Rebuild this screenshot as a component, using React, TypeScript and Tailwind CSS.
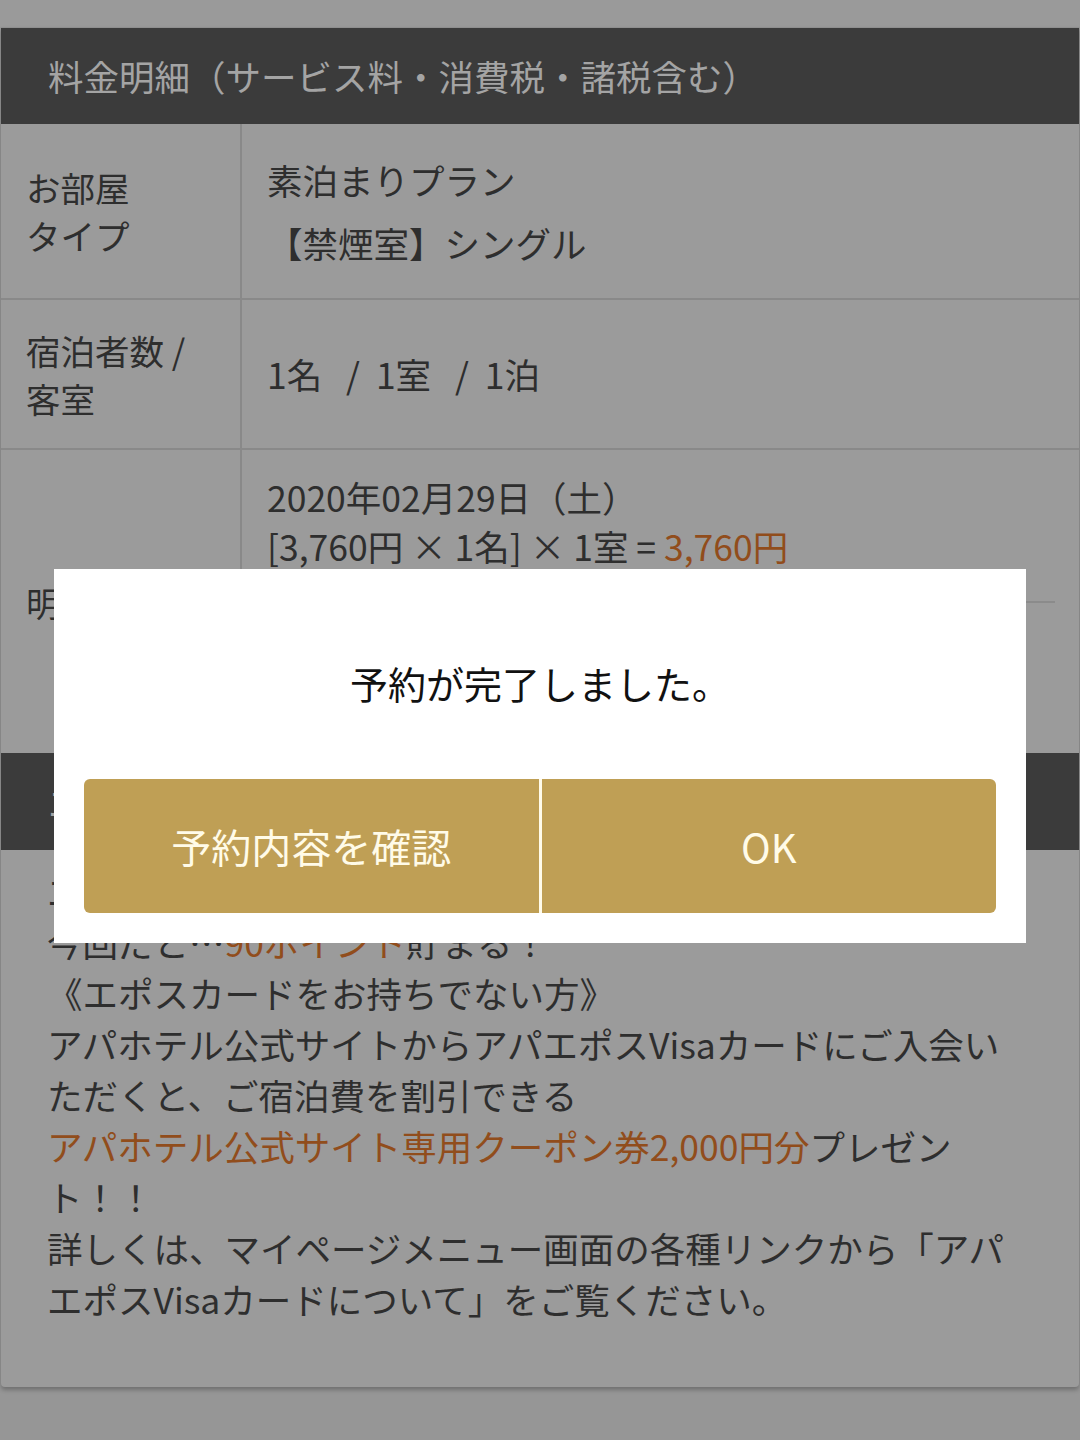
import React from "react";

const font = { fontFamily: '"Noto Sans CJK JP", "Noto Sans", sans-serif' };

export default function App() {
  return (
    <div
      className="relative h-[1440px] w-[1080px] overflow-hidden bg-[#969696] text-[#2e2e2e]"
      style={font}
    >
      <div className="h-[27px] bg-[#9a9a9a]" />
      {/* Card */}
      <div className="mx-[1px] rounded-b-[4px] bg-[#9b9b9b] shadow-[0_3px_4px_rgba(0,0,0,0.25)]">
        <div className="flex h-[97px] items-center border-t border-[#8e8e8e] bg-[#3b3b3b] px-[47px] text-[35.5px] leading-[48px] text-[#a4a4a4]">
          料金明細（サービス料・消費税・諸税含む）
        </div>

        {/* Row 1 */}
        <div className="grid h-[176px] grid-cols-[241px_1fr] border-b-2 border-[#898989]">
          <div className="flex items-center border-r-2 border-[#898989] pl-[25px] text-[34.5px] leading-[48px]">
            <div>
              お部屋
              <br />
              タイプ
            </div>
          </div>
          <div className="flex flex-col justify-center pl-[25px] text-[35.5px] leading-[48px]">
            <div>素泊まりプラン</div>
            <div className="mt-[15px]">【禁煙室】シングル</div>
          </div>
        </div>

        {/* Row 2 */}
        <div className="grid h-[150px] grid-cols-[241px_1fr] border-b-2 border-[#898989]">
          <div className="flex items-center border-r-2 border-[#898989] pl-[25px] text-[34.5px] leading-[48px]">
            <div>
              宿泊者数 /
              <br />
              客室
            </div>
          </div>
          <div className="flex items-center pl-[25px] text-[35.5px] leading-[48px]">
            1名&nbsp;&nbsp;&nbsp;/&nbsp;&nbsp;1室&nbsp;&nbsp;&nbsp;/&nbsp;&nbsp;1泊
          </div>
        </div>

        {/* Row 3 */}
        <div className="grid h-[303px] grid-cols-[241px_1fr]">
          <div className="flex items-center border-r-2 border-[#898989] pl-[25px] text-[34.5px] leading-[48px]">
            明細
          </div>
          <div className="pl-[25px] pr-[24px] pt-[22px] text-[35.5px] leading-[49px]">
            <div>2020年02月29日（土）</div>
            <div>
              [3,760円 × 1名] × 1室 = <span className="text-[#914d1c]">3,760円</span>
            </div>
            <div className="mt-[31px] border-t-2 border-[#8b8b8b] pt-[20px]">
              <div>
                合計 <span className="text-[#914d1c]">3,760円</span>
              </div>
            </div>
          </div>
        </div>

        {/* Section header 2 */}
        <div className="flex h-[97px] items-center bg-[#3b3b3b] px-[47px] text-[35.5px] leading-[48px] text-[#a4a4a4]">
          エポスカード会員様へ
        </div>

        <div className="px-[46px] pb-[63px] pt-[15px] text-[35.5px] leading-[51px]">
          エポスカードでお支払いいただくと
          <br />
          今回だと…<span className="text-[#914d1c]">90ポイント</span>貯まる！
          <br />
          《エポスカードをお持ちでない方》
          <br />
          アパホテル公式サイトからアパエポスVisaカードにご入会い
          <br />
          ただくと、ご宿泊費を割引できる
          <br />
          <span className="text-[#914d1c]">アパホテル公式サイト専用クーポン券2,000円分</span>プレゼン
          <br />
          ト！！
          <br />
          詳しくは、マイページメニュー画面の各種リンクから「アパ
          <br />
          エポスVisaカードについて」をご覧ください。
        </div>
      </div>

      {/* Modal */}
      <div className="absolute left-[54px] top-[569px] w-[972px] bg-white px-[30px] pb-[30px]">
        <div className="pb-[71px] pt-[88px] text-center text-[38px] leading-[51px] text-[#111]">
          予約が完了しました。
        </div>
        <div className="flex h-[134px] overflow-hidden rounded-[6px] bg-[#bf9f55]">
          <button className="flex flex-1 items-center justify-center text-[40px] text-[#fffbe8]" style={font}>
            予約内容を確認
          </button>
          <div className="w-[3px] bg-[#fffbea]" />
          <button className="flex flex-1 items-center justify-center text-[40px] text-[#fffbe8]" style={font}>
            OK
          </button>
        </div>
      </div>
    </div>
  );
}
